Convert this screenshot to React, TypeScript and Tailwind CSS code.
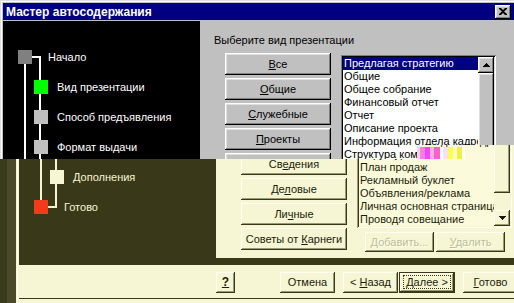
import type { ReactNode } from 'react'

type Theme = {
  dark: string
  face: string
  field: string
  track: string
  line: string
  treeText: string
  text: string
  frame: string
  btn: string
  btnDef: string
  sunken: string
  sel: string
  disabled: string
  nStart: string
  nCur: string
  nTodo: string
  nEnd: string
  title: string
  rule: string
  focus: string
  glyph: string
}

const normal: Theme = {
  dark: 'bg-black',
  face: 'bg-[#c0c0c0]',
  field: 'bg-white',
  track: 'bg-[#e0e0e0]',
  line: 'bg-white',
  treeText: 'text-white',
  text: 'text-black',
  frame: 'shadow-[inset_1px_1px_#dfdfdf,inset_2px_2px_#fff]',
  btn: 'shadow-[inset_-1px_-1px_#000,inset_1px_1px_#fff,inset_-2px_-2px_#808080,inset_2px_2px_#dfdfdf]',
  btnDef:
    'shadow-[inset_0_0_0_1px_#000,inset_-2px_-2px_#000,inset_2px_2px_#fff,inset_-3px_-3px_#808080]',
  sunken: 'shadow-[inset_1px_1px_#808080,inset_-1px_-1px_#fff,inset_2px_2px_#000,inset_-2px_-2px_#dfdfdf]',
  sel: 'bg-[#000080] text-white',
  disabled: 'text-[#808080] [text-shadow:1px_1px_0_#fff]',
  nStart: 'bg-[#808080]',
  nCur: 'bg-[#00ff00]',
  nTodo: 'bg-[#c0c0c0]',
  nEnd: 'bg-[#ff2000]',
  title: 'bg-[#000080] text-white',
  rule: 'bg-[#808080]',
  focus: 'border-black',
  glyph: '#000',
}

// the lower part of the shot came out shifted and yellow-tinted
const tinted: Theme = {
  dark: 'bg-[#393919]',
  face: 'bg-[#f6f6d4]',
  field: 'bg-[#fbfbdc]',
  track: 'bg-[#f6f6d4]',
  line: 'bg-[#f6f6d4]',
  treeText: 'text-[#f6f6d4]',
  text: 'text-[#1c1c08]',
  frame: 'shadow-[inset_1px_1px_#f6f6d4,inset_2px_2px_#fffff0]',
  btn: 'shadow-[inset_-1px_-1px_#393919,inset_1px_1px_#fffff0,inset_-2px_-2px_#9c9c74,inset_2px_2px_#f6f6d4]',
  btnDef:
    'shadow-[inset_0_0_0_1px_#393919,inset_-2px_-2px_#393919,inset_2px_2px_#fffff0,inset_-3px_-3px_#9c9c74]',
  sunken:
    'shadow-[inset_1px_1px_#9c9c74,inset_-1px_-1px_#fffff0,inset_2px_2px_#393919,inset_-2px_-2px_#f6f6d4]',
  sel: 'bg-[#1c1c60] text-white',
  disabled: 'text-[#bdbd98] [text-shadow:1px_1px_0_#fffff0]',
  nStart: 'bg-[#8a8a62]',
  nCur: 'bg-[#40f020]',
  nTodo: 'bg-[#f6f6d4]',
  nEnd: 'bg-[#f03c1c]',
  title: 'bg-[#1c1c60] text-white',
  rule: 'bg-[#393919]',
  focus: 'border-[#393919]',
  glyph: '#1c1c08',
}

const items = [
  'Предлагая стратегию',
  'Общие',
  'Общее собрание',
  'Финансовый отчет',
  'Отчет',
  'Описание проекта',
  'Информация отдела кадров',
  'Структура компании',
  'План продаж',
  'Рекламный буклет',
  'Объявления/реклама',
  'Личная основная страница',
  'Проводя совещание',
]

function Btn({
  t,
  className,
  children,
  def,
}: {
  t: Theme
  className: string
  children: ReactNode
  def?: boolean
}) {
  return (
    <div
      className={`shrink-0 flex items-center justify-center whitespace-nowrap leading-[13px] ${t.face} ${t.text} ${
        def ? t.btnDef : t.btn
      } ${className}`}
    >
      <span>{children}</span>
    </div>
  )
}

function Arrow({ t, down }: { t: Theme; down?: boolean }) {
  return (
    <div className={`h-[16px] flex items-center justify-center ${t.face} ${t.btn}`}>
      <svg width="7" height="4" viewBox="0 0 7 4" className={down ? 'rotate-180' : ''}>
        <path d="M3 0h1v1h1v1h1v1h1v1H0V3h1V2h1V1h1z" fill={t.glyph} />
      </svg>
    </div>
  )
}

function Tree({ t }: { t: Theme }) {
  const row = 'flex items-center h-[14px] whitespace-nowrap leading-[13px]'
  return (
    <div className={`relative w-[197px] h-[244px] shrink-0 ${t.treeText}`}>
      <div className={`absolute left-[21px] top-[43px] w-[2px] h-[136px] ${t.line}`} />
      <div className={`absolute left-[36px] top-[35px] w-[2px] h-[152px] ${t.line}`} />
      <div className={`absolute left-[29px] top-[35px] w-[9px] h-[2px] ${t.line}`} />
      <div className={`absolute left-[29px] top-[185px] w-[9px] h-[2px] ${t.line}`} />
      <div className="relative flex flex-col gap-[16px] pt-[29px]">
        <div className={row}>
          <div className={`w-[14px] h-[14px] ml-[15px] ${t.nStart}`} />
          <span className="ml-[16px]">Начало</span>
        </div>
        <div className={row}>
          <div className={`w-[14px] h-[14px] ml-[31px] ${t.nCur}`} />
          <span className="ml-[9px]">Вид презентации</span>
        </div>
        <div className={row}>
          <div className={`w-[14px] h-[14px] ml-[31px] ${t.nTodo}`} />
          <span className="ml-[9px]">Способ предъявления</span>
        </div>
        <div className={row}>
          <div className={`w-[14px] h-[14px] ml-[31px] ${t.nTodo}`} />
          <span className="ml-[9px]">Формат выдачи</span>
        </div>
        <div className={row}>
          <div className={`w-[14px] h-[14px] ml-[31px] ${t.nTodo}`} />
          <span className="ml-[9px]">Дополнения</span>
        </div>
        <div className={row}>
          <div className={`w-[14px] h-[14px] ml-[15px] ${t.nEnd}`} />
          <span className="ml-[16px]">Готово</span>
        </div>
      </div>
    </div>
  )
}

function Dialog({ t }: { t: Theme }) {
  const tb = 'w-[106px] h-[22px]'
  return (
    <div className={`w-[518px] h-[303px] shrink-0 flex flex-col p-[3px] pb-0 ${t.face} ${t.frame} ${t.text}`}>
      <div className={`h-[17px] shrink-0 flex items-center justify-between pl-[3px] pr-[4px] ${t.title}`}>
        <span className="font-bold text-[12px] leading-[14px] whitespace-nowrap">Мастер автосодержания</span>
        <div className={`w-[16px] h-[14px] flex items-center justify-center ${normal.face} ${normal.btn}`}>
          <svg width="8" height="7" viewBox="0 0 8 7">
            <path d="M0 0h2l2 2 2-2h2v1L5 3.5 8 6v1H6L4 5 2 7H0V6l3-2.5L0 1z" fill="#000" />
          </svg>
        </div>
      </div>
      <div className="h-[1px] shrink-0" />
      <div className={`flex h-[244px] shrink-0 ${t.dark}`}>
        <Tree t={t} />
        <div className="w-[315px] shrink-0">
          <div className={`h-[237px] ${t.face}`}>
            <div className="pt-[13px] pl-[14px] leading-[13px] whitespace-nowrap">Выберите вид презентации</div>
            <div className="flex items-start pl-[25px] mt-[6px]">
              <div className="flex flex-col gap-[3px] w-[106px] shrink-0">
                <Btn t={t} className={tb}>
                  <u>В</u>се
                </Btn>
                <Btn t={t} className={tb}>
                  <u>О</u>бщие
                </Btn>
                <Btn t={t} className={tb}>
                  <u>С</u>лужебные
                </Btn>
                <Btn t={t} className={tb}>
                  <u>П</u>роекты
                </Btn>
                <Btn t={t} className={tb}>
                  Св<u>е</u>дения
                </Btn>
                <Btn t={t} className={tb}>
                  Де<u>л</u>овые
                </Btn>
                <Btn t={t} className={tb}>
                  Ли<u>ч</u>ные
                </Btn>
                <Btn t={t} className={tb}>
                  Советы от <u>К</u>арнеги
                </Btn>
              </div>
              <div className="ml-[10px] mt-[2px] w-[155px] shrink-0">
                <div className={`h-[173px] p-[2px] flex ${t.field} ${t.sunken}`}>
                  <div className="w-[135px] flex flex-col overflow-hidden">
                    {items.map((it, i) => (
                      <div
                        key={it}
                        className={`h-[13px] leading-[13px] pl-[1px] whitespace-nowrap overflow-hidden ${
                          i === 0 ? t.sel : ''
                        }`}
                      >
                        {it}
                      </div>
                    ))}
                  </div>
                  <div className={`w-[16px] flex flex-col ${t.track}`}>
                    <Arrow t={t} />
                    <div className={`h-[120px] ${t.face} ${t.btn}`} />
                    <div className="flex-1" />
                    <Arrow t={t} down />
                  </div>
                </div>
                <div className="flex gap-[2px] mt-[4px] pl-[8px]">
                  <Btn t={t} className={`w-[69px] h-[20px] ${t.disabled}`}>
                    <u>Д</u>обавить...
                  </Btn>
                  <Btn t={t} className={`w-[69px] h-[20px] ${t.disabled}`}>
                    <u>У</u>далить
                  </Btn>
                </div>
              </div>
            </div>
          </div>
        </div>
      </div>
      <div className="h-[33px] shrink-0 flex items-start pt-[7px]">
        <Btn t={t} className="ml-[197px] w-[19px] h-[21px]">
          <span className="font-bold underline text-[12px]">?</span>
        </Btn>
        <Btn t={t} className="ml-[45px] w-[55px] h-[21px]">
          Отмена
        </Btn>
        <Btn t={t} className="ml-[8px] w-[55px] h-[21px]">
          &lt; <u>Н</u>азад
        </Btn>
        <Btn t={t} def className="ml-[1px] w-[56px] h-[21px]">
          <span className={`border border-dotted px-[2px] leading-[12px] ${t.focus}`}>
            <u>Д</u>алее &gt;
          </span>
        </Btn>
        <Btn t={t} className="ml-[8px] w-[55px] h-[21px]">
          <u>Г</u>отово
        </Btn>
      </div>
      <div className={`h-px shrink-0 ${t.rule}`} />
    </div>
  )
}

const noise = [
  ['w-[3px]', 'bg-[#ffd0f0]'],
  ['w-[5px]', 'bg-[#ff80e0]'],
  ['w-[5px]', 'bg-[#ff40ff]'],
  ['w-[4px]', 'bg-[#ffb0e8]'],
  ['w-[6px]', 'bg-[#ff60d0]'],
  ['w-[3px]', 'bg-[#ffffff]'],
  ['w-[5px]', 'bg-[#ffe0f0]'],
  ['w-[5px]', 'bg-[#ffff50]'],
  ['w-[4px]', 'bg-[#ffffc0]'],
  ['w-[5px]', 'bg-[#f0f040]'],
  ['w-[3px]', 'bg-[#ffffff]'],
]

export default function App() {
  return (
    <div className="relative grid w-[514px] h-[303px] grid-cols-[514px] grid-rows-[303px] overflow-hidden font-['Liberation_Sans',Arial,sans-serif] text-[11px]">
      <div className="col-start-1 row-start-1 overflow-hidden">
        <Dialog t={normal} />
      </div>
      <div className="col-start-1 row-start-1 flex overflow-hidden [clip-path:polygon(0_159px,417px_159px,417px_145px,100%_145px,100%_100%,0_100%)]">
        <div className="w-[7px] shrink-0 bg-[#3a3a1c]" />
        <div className="w-[9px] shrink-0 bg-[#4a4a2a]" />
        <Dialog t={tinted} />
      </div>
      {/* jpeg noise blob over the seam */}
      <div className="absolute left-[417px] top-[147px] w-[48px] h-[12px] flex z-10">
        {noise.map(([w, c], i) => (
          <div key={i} className={`h-[12px] shrink-0 ${w} ${c}`} />
        ))}
      </div>
    </div>
  )
}
